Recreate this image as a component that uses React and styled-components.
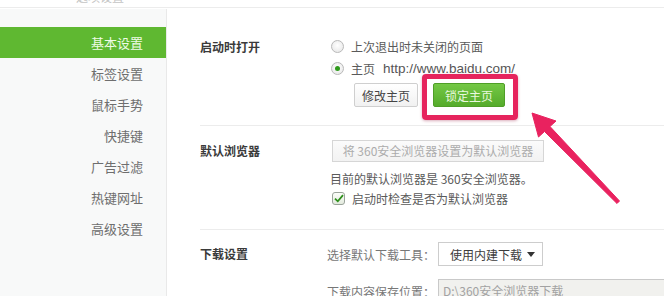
import React from "react";
import styled, { createGlobalStyle } from "styled-components";

const Global = createGlobalStyle`
  html, body { margin: 0; padding: 0; background: #fff; }
  body { font-family: "Noto Sans CJK SC", "Noto Sans", sans-serif; font-size: 12px; color: #555; }
  * { box-sizing: border-box; }
`;

const Page = styled.div`
  position: relative;
  width: 664px;
  height: 296px;
  overflow: hidden;
  background: #fff;
`;

const TopBar = styled.div`
  height: 8px;
  border-bottom: 1px solid #ececec;
  overflow: hidden;
  padding-left: 76px;
`;

const TopTitle = styled.div`
  margin-top: -10px;
  font-size: 12px;
  line-height: 14px;
  color: #c4c4c4;
`;

const Body = styled.div`
  display: flex;
  margin-top: 1px;
  height: 290px;
`;

const Sidebar = styled.nav`
  width: 167px;
  flex: none;
  background: #f8f9f9;
  border-right: 1px solid #e9e9e9;
  padding-top: 18px;
`;

const NavItem = styled.div`
  height: 31px;
  line-height: 31px;
  text-align: right;
  padding-right: 23px;
  font-size: 13px;
  color: ${p => (p.$active ? "#eefbe6" : "#6e6e6e")};
  background: ${p => (p.$active ? "#5fb831" : "transparent")};
`;

const Content = styled.main`
  flex: 1;
  padding-left: 33px;
`;

const Section = styled.section`
  display: grid;
  grid-template-columns: 130px 1fr;
  border-top: ${p => (p.$first ? "none" : "1px solid #ececec")};
  padding-top: ${p => p.$pt}px;
  padding-bottom: ${p => p.$pb}px;
`;

const Label = styled.div`
  font-weight: bold;
  color: #3a3a3a;
  font-size: 12px;
  line-height: ${p => p.$lh}px;
  height: ${p => p.$lh}px;
`;

const Controls = styled.div`
  display: flex;
  flex-direction: column;
`;

const OptionRow = styled.div`
  display: flex;
  align-items: center;
  height: ${p => p.$h || 22}px;
  margin-top: ${p => p.$mt || 0}px;
  color: #5a5a5a;
`;

const Radio = styled.span`
  width: 13px;
  height: 13px;
  border-radius: 50%;
  border: 1px solid #b9b9b9;
  background: radial-gradient(circle at 50% 40%, #ffffff 0%, #e4e4e4 100%);
  margin: 0 7px 0 1px;
  display: inline-flex;
  align-items: center;
  justify-content: center;
  &::after {
    content: "";
    width: 5px;
    height: 5px;
    border-radius: 50%;
    background: ${p => (p.$checked ? "#2f9a1c" : "transparent")};
  }
`;

const Url = styled.span`
  margin-left: 8px;
  color: #555;
  font-family: "Liberation Sans", Arial, sans-serif;
  font-size: 13.5px;
`;

const ButtonRow = styled.div`
  display: flex;
  gap: 15px;
  margin-top: 4px;
  padding-left: 24px;
`;

const Button = styled.button`
  height: 24px;
  padding: 0;
  width: ${p => p.$w}px;
  font-family: inherit;
  font-size: 12px;
  border-radius: 2px;
  border: 1px solid ${p => (p.$primary ? "#4f9e27" : "#cfcfcf")};
  color: ${p => (p.$primary ? "#e9f8de" : "#444")};
  background: ${p =>
    p.$primary
      ? "linear-gradient(#74c845, #55ab2b)"
      : "linear-gradient(#ffffff, #f1f1f1)"};
`;

const Anchor = styled.span`
  position: relative;
  display: inline-flex;
`;

const Highlight = styled.span`
  position: absolute;
  left: -11px;
  top: -9px;
  right: -13px;
  bottom: -13px;
  border: 5px solid #e6245d;
  border-radius: 4px;
  box-shadow: 0 1px 3px rgba(150, 20, 60, 0.35);
  pointer-events: none;
`;

const WideButton = styled.div`
  width: 212px;
  height: 22px;
  margin-left: 2px;
  border: 1px solid #d6d6d6;
  background: linear-gradient(#fbfbfb, #f2f2f2);
  color: #acacac;
  font-size: 12px;
  line-height: 20px;
  text-align: center;
`;

const Note = styled.div`
  margin-top: 7px;
  line-height: 20px;
  color: #5a5a5a;
`;

const Checkbox = styled.span`
  width: 13px;
  height: 13px;
  border: 1px solid #9aa39a;
  border-radius: 3px;
  background: linear-gradient(#fbfdf9, #e3eade);
  margin: 0 7px 0 2px;
  display: inline-flex;
  align-items: center;
  justify-content: center;
`;

const InlineLabel = styled.span`
  width: 111px;
  flex: none;
  color: #777;
  margin-left: -3px;
`;

const Select = styled.div`
  width: 105px;
  height: 24px;
  border: 1px solid #cdcdcd;
  background: #fff;
  display: flex;
  align-items: center;
  justify-content: space-between;
  padding: 0 7px 0 11px;
  color: #3c3c3c;
`;

const Caret = styled.span`
  width: 0;
  height: 0;
  border-left: 4px solid transparent;
  border-right: 4px solid transparent;
  border-top: 5px solid #333;
`;

const PathInput = styled.div`
  width: 240px;
  height: 24px;
  flex: none;
  border: 1px solid #c9c9c9;
  background: #f1f1ee;
  color: #a2a2a2;
  line-height: 22px;
  padding-left: 4px;
`;

const ArrowSvg = styled.svg`
  position: absolute;
  left: 0;
  top: 0;
  pointer-events: none;
`;

const navItems = ["基本设置", "标签设置", "鼠标手势", "快捷键", "广告过滤", "热键网址", "高级设置"];

export default function App() {
  return (
    <Page>
      <Global />
      <TopBar>
        <TopTitle>选项设置</TopTitle>
      </TopBar>
      <Body>
        <Sidebar>
          {navItems.map((t, i) => (
            <NavItem key={t} $active={i === 0}>{t}</NavItem>
          ))}
        </Sidebar>
        <Content>
          <Section $first $pt={26} $pb={18}>
            <Label $lh={24}>启动时打开</Label>
            <Controls>
              <OptionRow>
                <Radio />
                上次退出时未关闭的页面
              </OptionRow>
              <OptionRow>
                <Radio $checked />
                主页<Url>http://www.baidu.com/</Url>
              </OptionRow>
              <ButtonRow>
                <Button $w={64}>修改主页</Button>
                <Anchor>
                  <Button $primary $w={72}>锁定主页</Button>
                  <Highlight />
                </Anchor>
              </ButtonRow>
            </Controls>
          </Section>
          <Section $pt={14} $pb={22}>
            <Label $lh={22}>默认浏览器</Label>
            <Controls>
              <WideButton>将 360安全浏览器设置为默认浏览器</WideButton>
              <Note>目前的默认浏览器是 360安全浏览器。</Note>
              <OptionRow $h={18}>
                <Checkbox>
                  <svg width="10" height="9" viewBox="0 0 10 9">
                    <path d="M1 4.6 L3.8 7.3 L9 1.2" fill="none" stroke="#2e8f1c" strokeWidth="1.8" />
                  </svg>
                </Checkbox>
                启动时检查是否为默认浏览器
              </OptionRow>
            </Controls>
          </Section>
          <Section $pt={12} $pb={0}>
            <Label $lh={24}>下载设置</Label>
            <Controls>
              <OptionRow $h={24}>
                <InlineLabel>选择默认下载工具：</InlineLabel>
                <Select>
                  使用内建下载
                  <Caret />
                </Select>
              </OptionRow>
              <OptionRow $h={24} $mt={13}>
                <InlineLabel>下载内容保存位置：</InlineLabel>
                <PathInput>D:\360安全浏览器下载</PathInput>
              </OptionRow>
            </Controls>
          </Section>
        </Content>
      </Body>
      <ArrowSvg width="664" height="296" viewBox="0 0 664 296">
        <polygon
          points="532,113 556,121 550,126.5 619.5,201 617,203.5 544.5,131.5 538.5,137"
          fill="#e9225f"
          stroke="#e9225f"
          strokeWidth="1"
          strokeLinejoin="round"
        />
      </ArrowSvg>
    </Page>
  );
}
